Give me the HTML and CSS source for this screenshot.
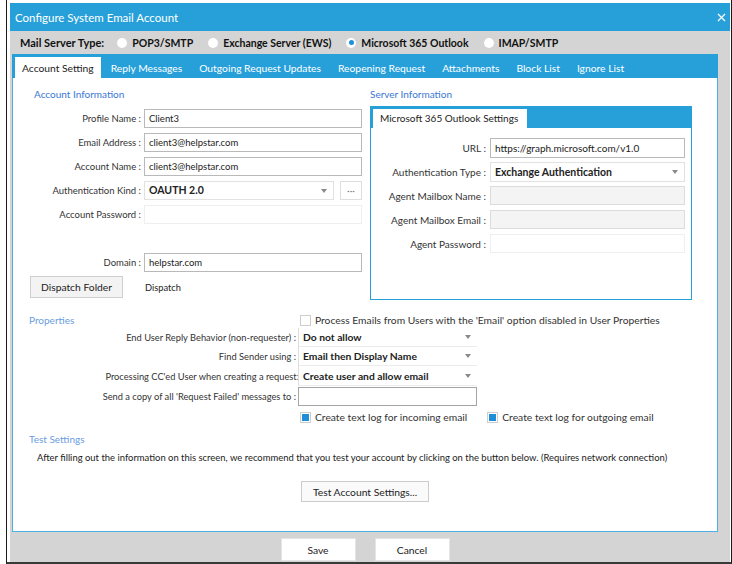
FILE: index.html
```html
<!DOCTYPE html>
<html>
<head>
    <meta charset="utf-8">
    <title>Configure System Email Account</title>
    <link rel="stylesheet" href="styles.css">
</head>
<body>
    <div class="screen">
        <div class="dialog">
            <div class="titlebar">
                <span class="title">Configure System Email Account</span>
                <svg class="close" width="9" height="9" viewBox="0 0 9 9"><path d="M1 1L8 8M8 1L1 8" stroke="#fff" stroke-width="1.3"/></svg>
            </div>

            <div class="server-type">
                <span class="server-type-label">Mail Server Type:</span>
                <span class="radio"><span class="radio-dot"></span>POP3/SMTP</span>
                <span class="radio"><span class="radio-dot"></span>Exchange Server (EWS)</span>
                <span class="radio checked"><span class="radio-dot"></span>Microsoft 365 Outlook</span>
                <span class="radio"><span class="radio-dot"></span>IMAP/SMTP</span>
            </div>

            <div class="tabs">
                <span class="tab active">Account Setting</span>
                <span class="tab">Reply Messages</span>
                <span class="tab">Outgoing Request Updates</span>
                <span class="tab">Reopening Request</span>
                <span class="tab">Attachments</span>
                <span class="tab">Block List</span>
                <span class="tab">Ignore List</span>
            </div>

            <div class="panel">
                <div class="top">
                    <div class="account">
                        <div class="section-title indent">Account Information</div>
                        <div class="account-form">
                            <label>Profile Name :</label>
                            <div class="field">Client3</div>
                            <label>Email Address :</label>
                            <div class="field">client3@helpstar.com</div>
                            <label>Account Name :</label>
                            <div class="field">client3@helpstar.com</div>
                            <label>Authentication Kind :</label>
                            <div class="field-group">
                                <div class="select bold">OAUTH 2.0<span class="caret"></span></div>
                                <div class="more">&middot;&middot;&middot;</div>
                            </div>
                            <label>Account Password :</label>
                            <div class="field faint"></div>
                            <div class="spacer"></div>
                            <label>Domain :</label>
                            <div class="field">helpstar.com</div>
                        </div>
                        <div class="dispatch-row">
                            <button class="btn dispatch-btn">Dispatch Folder</button>
                            <span class="dispatch-name">Dispatch</span>
                        </div>
                    </div>

                    <div class="server">
                        <div class="section-title">Server Information</div>
                        <div class="group">
                            <div class="group-head">
                                <span class="group-tab">Microsoft 365 Outlook Settings</span>
                            </div>
                            <div class="server-form">
                                <label>URL :</label>
                                <div class="field big">https://graph.microsoft.com/v1.0</div>
                                <label>Authentication Type :</label>
                                <div class="select big bold">Exchange Authentication<span class="caret"></span></div>
                                <label>Agent Mailbox Name :</label>
                                <div class="field disabled"></div>
                                <label>Agent Mailbox Email :</label>
                                <div class="field disabled"></div>
                                <label>Agent Password :</label>
                                <div class="field faint"></div>
                            </div>
                        </div>
                    </div>
                </div>

                <div class="props">
                    <div class="section-title light indent-sm">Properties</div>
                    <div class="check-line">
                        <span class="check"></span>Process Emails from Users with the 'Email' option disabled in User Properties
                    </div>

                    <label>End User Reply Behavior (non-requester) :</label>
                    <div class="combo">Do not allow<span class="caret"></span></div>
                    <label>Find Sender using :</label>
                    <div class="combo">Email then Display Name<span class="caret"></span></div>
                    <label class="tight">Processing CC'ed User when creating a request:</label>
                    <div class="combo tall">Create user and allow email<span class="caret"></span></div>
                    <label>Send a copy of all 'Request Failed' messages to :</label>
                    <div class="field dark"></div>

                    <div></div>
                    <div class="check-row">
                        <span class="check-line"><span class="check on"></span>Create text log for incoming email</span>
                        <span class="check-line"><span class="check on"></span>Create text log for outgoing email</span>
                    </div>
                </div>

                <div class="test">
                    <div class="section-title light indent-sm">Test Settings</div>
                    <p class="test-note">After filling out the information on this screen, we recommend that you test your account by clicking on the button below. (Requires network connection)</p>
                    <button class="btn test-btn">Test Account Settings...</button>
                </div>
            </div>

            <div class="footer">
                <button class="btn footer-btn">Save</button>
                <button class="btn footer-btn">Cancel</button>
            </div>
        </div>
    </div>
</body>
</html>
```

FILE: styles.css
```css
body {
    margin: 0;
    width: 732px;
    height: 564px;
    overflow: hidden;
    background-color: #fff;
    font-family: Lato, "Open Sans", sans-serif;
    color: #333;
}

.screen {
    margin-left: 6px;
    padding: 3px 0 0 3px;
    height: 559px;
    border-left: 1px solid #1a1a1a;
    border-right: 1px solid #1a1a1a;
    border-bottom: 2px solid #3a3a3a;
}

.dialog {
    width: 720px;
    height: 559px;
    background-color: #d4d4d4;
    display: flex;
    flex-direction: column;
}

.titlebar {
    height: 28px;
    background-color: #27a0da;
    color: #fff;
    display: flex;
    align-items: center;
    justify-content: space-between;
    padding: 0 4px 0 5px;
    font-size: 11.5px;
}

.server-type {
    height: 23px;
    display: flex;
    align-items: center;
    padding-left: 10px;
    font-size: 10.5px;
    font-weight: bold;
    color: #111;
}

.server-type-label {
    font-size: 11px;
    margin-right: 13px;
}

.radio {
    display: flex;
    align-items: center;
    margin-right: 15px;
}

.radio-dot {
    width: 10px;
    height: 10px;
    border-radius: 50%;
    background-color: #fff;
    margin-right: 5px;
    display: flex;
    align-items: center;
    justify-content: center;
}

.radio.checked .radio-dot::after {
    content: "";
    width: 5px;
    height: 5px;
    border-radius: 50%;
    background-color: #1e90d8;
}

.tabs {
    margin: 0 12px 0 2px;
    height: 24px;
    background-color: #27a0da;
    display: flex;
    align-items: flex-end;
    padding-left: 3px;
}

.tab {
    height: 21px;
    padding: 0 8px;
    margin-right: 1px;
    display: flex;
    align-items: center;
    color: #fff;
    font-size: 10.3px;
}

.tab.active {
    padding: 0 7px;
    margin-right: 2px;
    background-color: #fff;
    color: #222;
}

.panel {
    margin: 0 12px 0 2px;
    height: 453px;
    background-color: #fff;
    border: 1px solid #4cb0e2;
    border-top: none;
}

.top {
    display: flex;
    padding-top: 8px;
}

.account {
    width: 357px;
}

.section-title {
    height: 16px;
    line-height: 16px;
    font-size: 10px;
    color: #3a78d4;
}

.section-title.light {
    color: #6a9de0;
}

.section-title.indent {
    padding-left: 21px;
}

.section-title.indent-sm {
    padding-left: 16px;
}

label {
    font-size: 9.5px;
    color: #333;
    text-align: right;
    white-space: nowrap;
    align-self: center;
}

.account-form {
    margin-top: 7px;
    display: grid;
    grid-template-columns: 128px 218px;
    grid-auto-rows: 19px;
    column-gap: 3px;
    row-gap: 5px;
}

.field {
    box-sizing: border-box;
    height: 19px;
    border: 1px solid #b9b9b9;
    background-color: #fff;
    padding: 0 4px;
    font-size: 9.5px;
    line-height: 17px;
    color: #222;
    white-space: nowrap;
}

.field.faint {
    border-color: #efefef;
}

.field.disabled {
    background-color: #f4f4f4;
    border-color: #dcdcdc;
}

.field.dark {
    border-color: #a4a4a4;
}

.field.big,
.select.big {
    font-size: 10px;
    height: 20px;
    line-height: 18px;
}

.select.big.bold {
    font-size: 10.5px;
}

.field-group {
    display: flex;
    gap: 6px;
}

.select {
    box-sizing: border-box;
    flex: 1;
    height: 19px;
    border: 1px solid #e2e2e2;
    padding: 0 4px;
    font-size: 10.5px;
    line-height: 17px;
    color: #222;
    display: flex;
    justify-content: space-between;
    align-items: center;
}

.bold {
    font-weight: bold;
}

.caret {
    width: 0;
    height: 0;
    border-top: 4px solid #8a8a8a;
    border-left: 3px solid transparent;
    border-right: 3px solid transparent;
    margin-right: 2px;
}

.more {
    box-sizing: border-box;
    width: 22px;
    height: 19px;
    border: 1px solid #dedede;
    text-align: center;
    font-size: 10px;
    line-height: 16px;
    color: #777;
}

.spacer {
    grid-column: 1 / 3;
    height: 20px;
}

.dispatch-row {
    display: flex;
    align-items: center;
    margin-top: 4px;
}

.btn {
    font-family: Lato, "Open Sans", sans-serif;
    font-size: 10.3px;
    color: #222;
    cursor: pointer;
}

.dispatch-btn {
    width: 93px;
    height: 22px;
    margin-left: 17px;
    background-color: #f3f3f3;
    border: 1px solid #cfcfcf;
}

.dispatch-name {
    margin-left: 22px;
    font-size: 9.3px;
    color: #222;
}

.server {
    width: 322px;
}

.group {
    box-sizing: border-box;
    margin-top: 4px;
    height: 194px;
    border: 1px solid #27a0da;
}

.group-head {
    height: 21px;
    background-color: #27a0da;
    padding: 2px 0 0 2px;
    box-sizing: border-box;
    display: flex;
}

.group-tab {
    background-color: #fff;
    width: 154px;
    box-sizing: border-box;
    padding-left: 7px;
    font-size: 10px;
    line-height: 19px;
    color: #222;
    white-space: nowrap;
}

.server-form {
    padding-top: 10px;
    display: grid;
    grid-template-columns: 115px 195px;
    grid-auto-rows: 20px;
    column-gap: 4px;
    row-gap: 4px;
}

.server-form label {
    font-size: 10px;
}

.props {
    margin-top: 12px;
    display: grid;
    grid-template-columns: 283px 179px;
    column-gap: 2px;
}

.props label {
    font-size: 9.3px;
}

.props label.tight {
    margin-right: -3px;
}

.check-line {
    display: flex;
    align-items: center;
    font-size: 10.3px;
    white-space: nowrap;
    color: #333;
}

.check {
    flex-shrink: 0;
    box-sizing: border-box;
    width: 11px;
    height: 11px;
    margin: 0 4px 0 2px;
    border: 1px solid #cdcdcd;
    background-color: #fff;
    display: flex;
    align-items: center;
    justify-content: center;
}

.check.on::after {
    content: "";
    width: 7px;
    height: 7px;
    background-color: #1e8fd6;
}

.combo {
    box-sizing: border-box;
    height: 19px;
    border-left: 1px solid #dedede;
    border-bottom: 1px solid #ececec;
    padding: 0 4px;
    font-size: 10.3px;
    font-weight: bold;
    color: #222;
    display: flex;
    justify-content: space-between;
    align-items: center;
}

.combo.tall {
    height: 20px;
}

.props .field.dark {
    margin-top: 1px;
}

.check-row {
    display: flex;
    margin-top: 5px;
    gap: 18px;
}

.test {
    margin-top: 8px;
}

.test-note {
    margin: 3px 0 0 24px;
    font-size: 9.45px;
    line-height: 16px;
    color: #222;
    white-space: nowrap;
}

.test-btn {
    display: block;
    margin: 15px auto 0;
    width: 128px;
    height: 21px;
    background-color: #fafafa;
    border: 1px solid #cccccc;
}

.footer {
    margin: 0 12px 0 2px;
    height: 30px;
    display: flex;
    justify-content: center;
    align-items: flex-start;
    padding-top: 6px;
    box-sizing: border-box;
    gap: 19px;
}

.footer-btn {
    width: 75px;
    height: 23px;
    background-color: #fff;
    border: 1px solid #e4e4e4;
}
```
